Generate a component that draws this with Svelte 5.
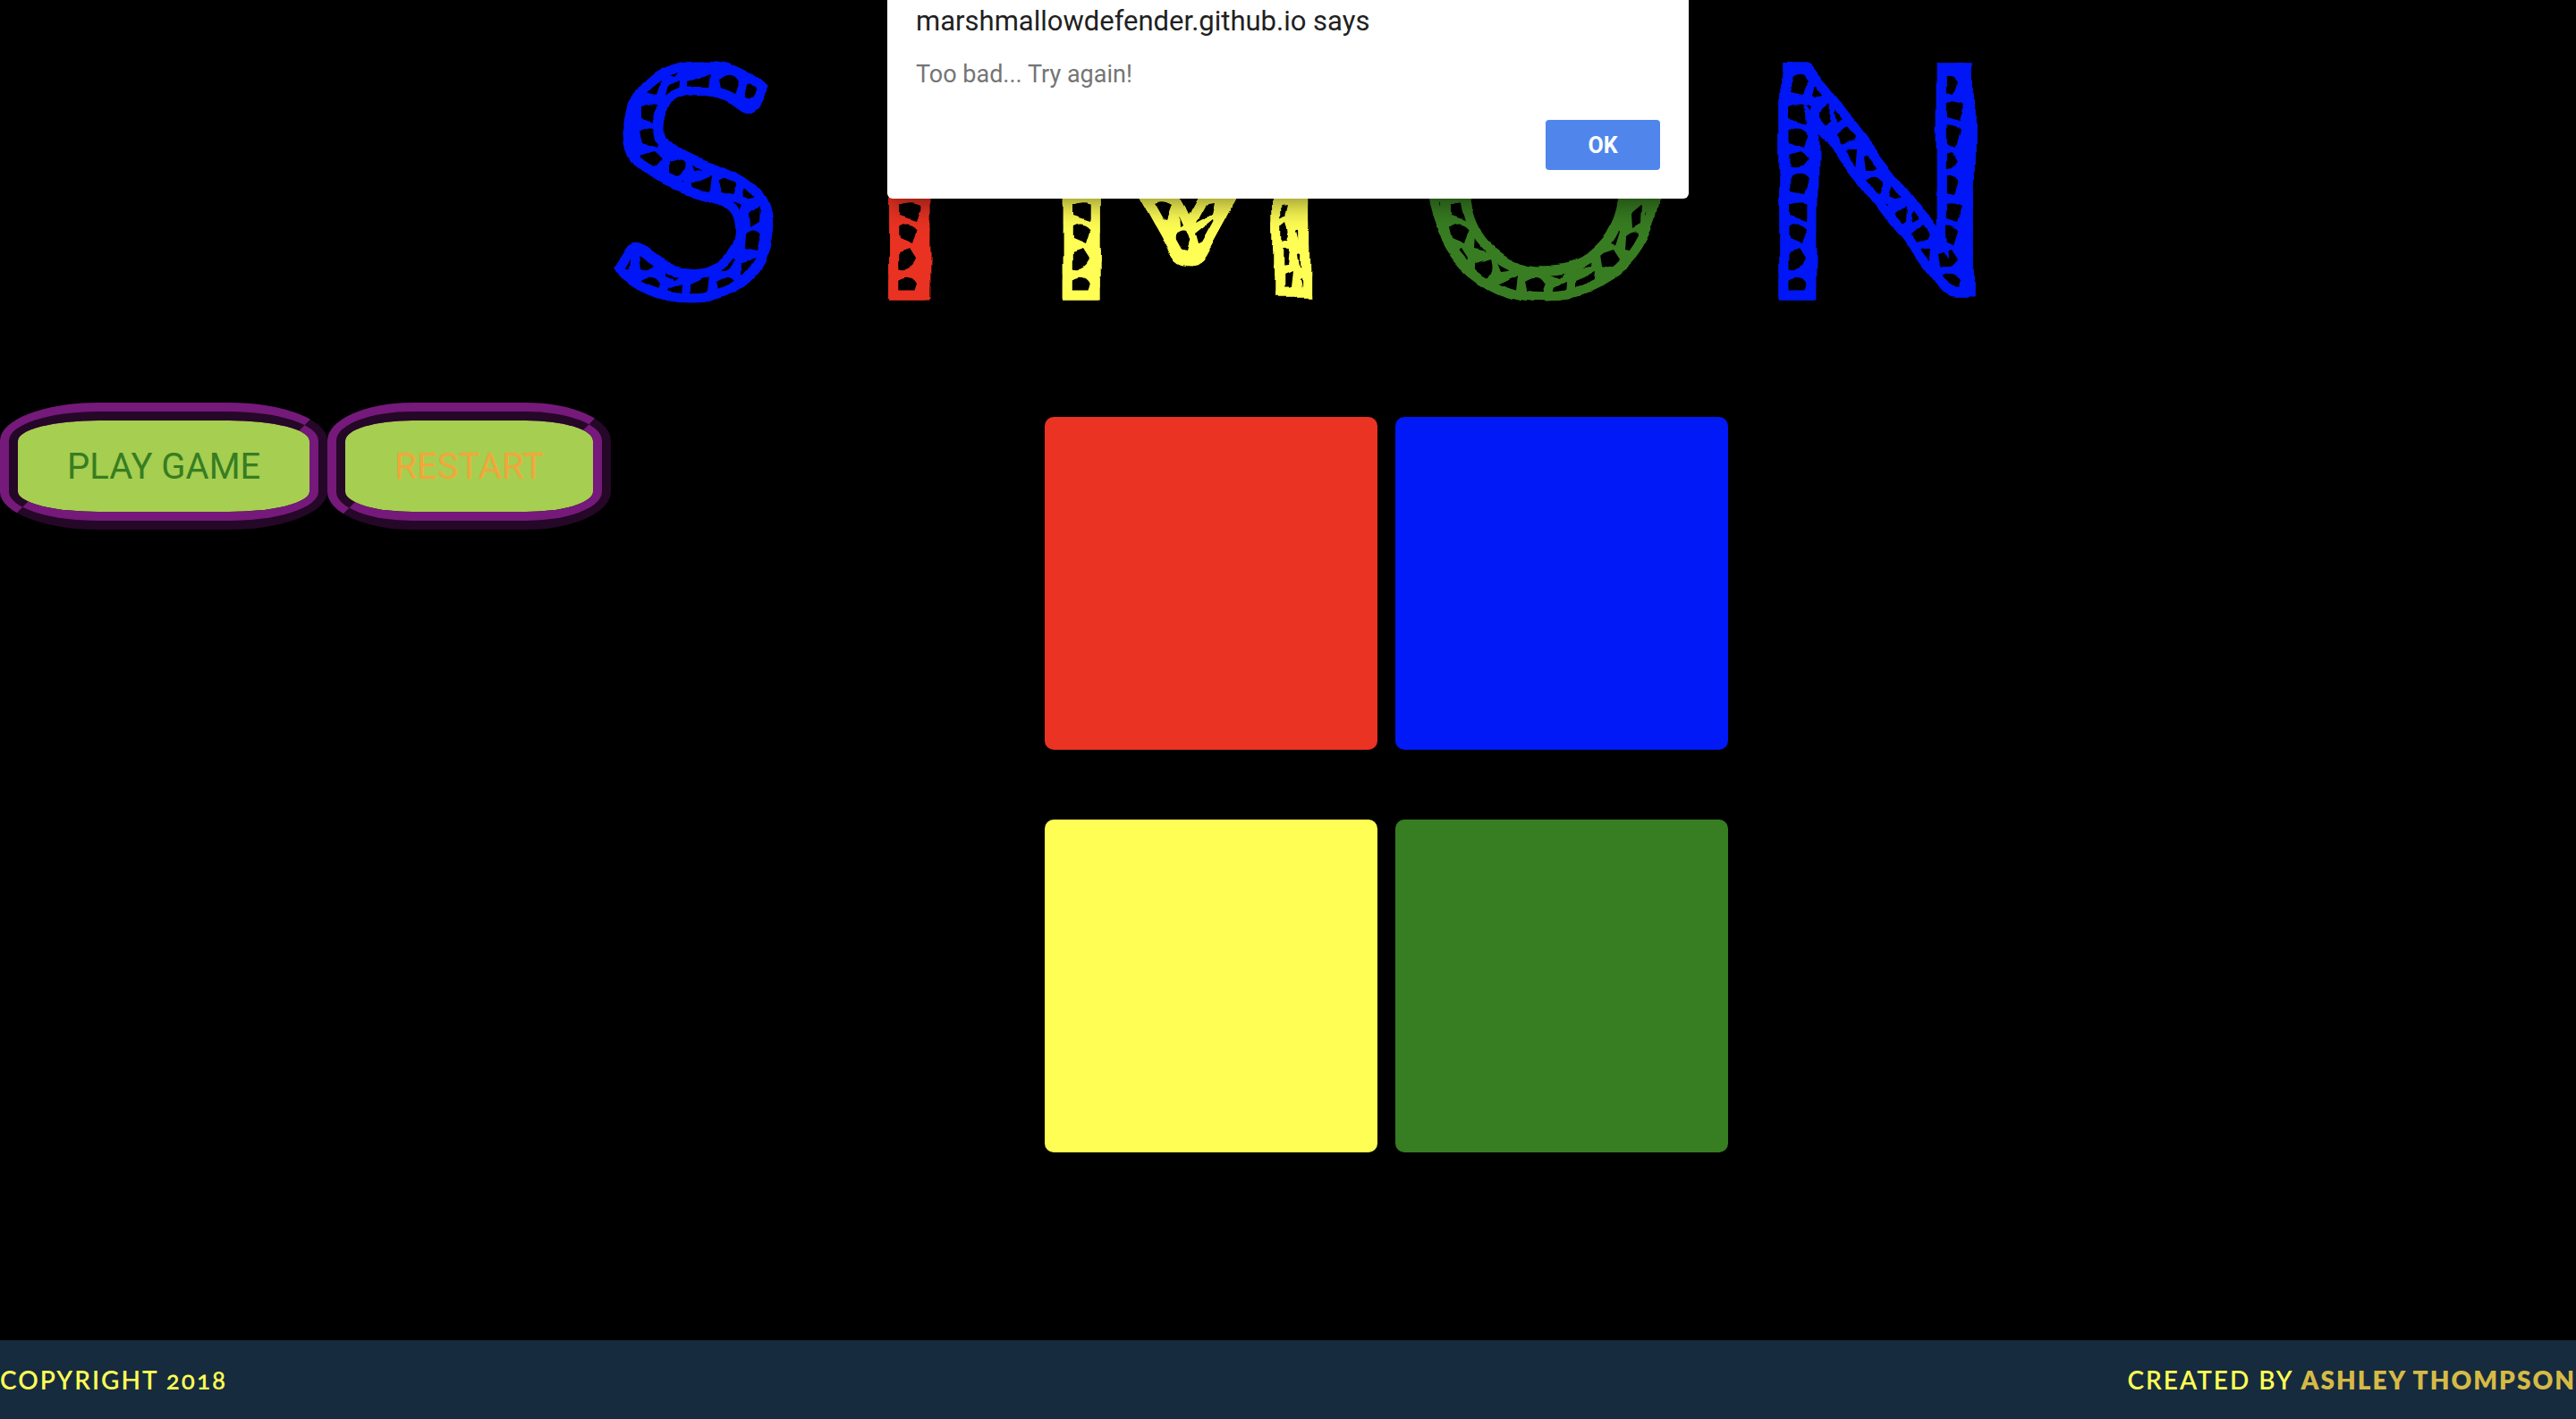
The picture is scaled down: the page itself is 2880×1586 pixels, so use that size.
<script>
  const letters = [
    { char: 'S', ink: 'blue' },
    { char: 'I', ink: 'red' },
    { char: 'M', ink: 'yellow' },
    { char: 'O', ink: 'green' },
    { char: 'N', ink: 'blue' }
  ];
  const pads = ['red', 'blue', 'yellow', 'green'];

  let open = $state(true);

  function close() {
    open = false;
  }
</script>

<div class="page">
  <!-- Wobbles the edges of the title so it looks drawn by hand -->
  <svg class="defs" width="0" height="0" aria-hidden="true">
    <filter id="rough" x="-10%" y="-10%" width="120%" height="120%">
      <feTurbulence type="fractalNoise" baseFrequency="0.014" numOctaves="2" seed="7" result="noise" />
      <feDisplacementMap in="SourceGraphic" in2="noise" scale="16" xChannelSelector="R" yChannelSelector="G" />
    </filter>
  </svg>

  <header>
    <h1 aria-label="SIMON">
      {#each letters as letter}
        <span class="letter {letter.ink}">{letter.char}</span>
      {/each}
    </h1>
  </header>

  <main>
    <div class="controls">
      <button type="button" class="control play">PLAY GAME</button>
      <button type="button" class="control restart">RESTART</button>
    </div>
    <div class="board">
      {#each pads as pad}
        <button type="button" class="pad {pad}" aria-label="{pad} pad"></button>
      {/each}
    </div>
  </main>

  <footer>
    <span>COPYRIGHT 2018</span>
    <span>CREATED BY <a href="#author">ASHLEY THOMPSON</a></span>
  </footer>

  {#if open}
    <div class="dialog" role="alertdialog" aria-labelledby="alert-title" aria-describedby="alert-text">
      <h2 id="alert-title">marshmallowdefender.github.io says</h2>
      <p id="alert-text">Too bad... Try again!</p>
      <button type="button" class="ok" onclick={close}>OK</button>
    </div>
  {/if}
</div>

<style>
  :global(body) {
    margin: 0;
    background: #000;
  }

  .page {
    position: relative;
    display: flex;
    flex-direction: column;
    min-height: 100vh;
    background: #000;
    font-family: Roboto, 'Liberation Sans', sans-serif;
  }

  .defs {
    position: absolute;
  }

  .red { --ink: #ea3323; }
  .blue { --ink: #0019f6; }
  .yellow { --ink: #fffe54; }
  .green { --ink: #377d22; }

  header {
    padding: 0 0 66px;
  }

  h1 {
    display: flex;
    justify-content: center;
    gap: 96px;
    margin: 0;
    padding-left: 36px;
    font-family: Lato, 'Open Sans', sans-serif;
    font-size: 352px;
    font-weight: 400;
    line-height: 384px;
  }

  /* Solid rim around each letter, with rough dark strokes showing in the middle */
  .letter {
    background-color: var(--ink);
    background-image: url("data:image/svg+xml,%3Csvg xmlns='http://www.w3.org/2000/svg' width='84' height='112'%3E%3Cpath d='M2 16Q8 4 26 3L23 16 4 26zM38 6Q50 0 62 7L56 24 38 18zM70 16L82 6 81 26 71 32zM3 39L24 22Q29 34 24 44L6 50zM35 32Q48 22 57 34L52 50 38 44zM64 40Q74 31 81 40L76 58 63 55zM2 66Q10 52 25 54L23 74 6 76zM34 60L49 55 56 66Q49 80 36 75zM63 69L79 64Q84 76 73 86L63 82zM4 90L27 80 25 98Q16 108 4 104zM35 88Q50 78 57 91L52 106 38 103zM66 96L80 90 79 107Q70 113 63 108z'/%3E%3C/svg%3E");
    -webkit-background-clip: text;
    background-clip: text;
    -webkit-text-fill-color: transparent;
    -webkit-text-stroke: 11px var(--ink);
    filter: url(#rough);
  }

  main {
    display: grid;
    grid-template-columns: 73fr 107fr;
    flex: 1;
    align-items: start;
  }

  .controls {
    display: flex;
  }

  .control {
    padding: 27px 55px 25px;
    border: 20px ridge #75197b;
    border-radius: 30%;
    background: #a6ce50;
    font-family: inherit;
    font-size: 40px;
    line-height: 50px;
    white-space: nowrap;
  }

  .play { color: #377d22; }
  .restart { color: #f2a63b; }

  .board {
    display: grid;
    grid-template-columns: repeat(2, 372px);
    gap: 78px 20px;
    padding: 16px 0 80px;
  }

  .pad {
    aspect-ratio: 1;
    padding: 0;
    border: 0;
    border-radius: 10px;
    background: var(--ink);
  }

  footer {
    display: flex;
    justify-content: space-between;
    padding: 20px 0;
    background: #162b3e;
    color: #fffe54;
    font-family: Lato, sans-serif;
    font-size: 28px;
    font-weight: 600;
    font-variant-numeric: oldstyle-nums;
    letter-spacing: 2px;
    line-height: 48px;
  }

  footer a {
    color: #d6ba46;
    font-weight: 800;
    text-decoration: none;
  }

  .dialog {
    position: absolute;
    top: 0;
    left: 50%;
    display: flex;
    flex-direction: column;
    box-sizing: border-box;
    width: 896px;
    margin-left: -448px;
    padding: 4px 32px 32px;
    border-radius: 0 0 6px 6px;
    background: #fff;
    box-shadow: 0 4px 32px rgba(0, 0, 0, 0.5);
  }

  h2 {
    margin: 0;
    color: #212121;
    font-size: 31px;
    font-weight: 400;
    line-height: 40px;
  }

  p {
    margin: 21px 0 33px;
    color: #757575;
    font-size: 27px;
    line-height: 36px;
  }

  .ok {
    align-self: flex-end;
    width: 128px;
    height: 56px;
    padding: 0;
    border: 0;
    border-radius: 4px;
    background: #5086ec;
    color: #fff;
    font-family: inherit;
    font-size: 25px;
    font-weight: 700;
  }
</style>
